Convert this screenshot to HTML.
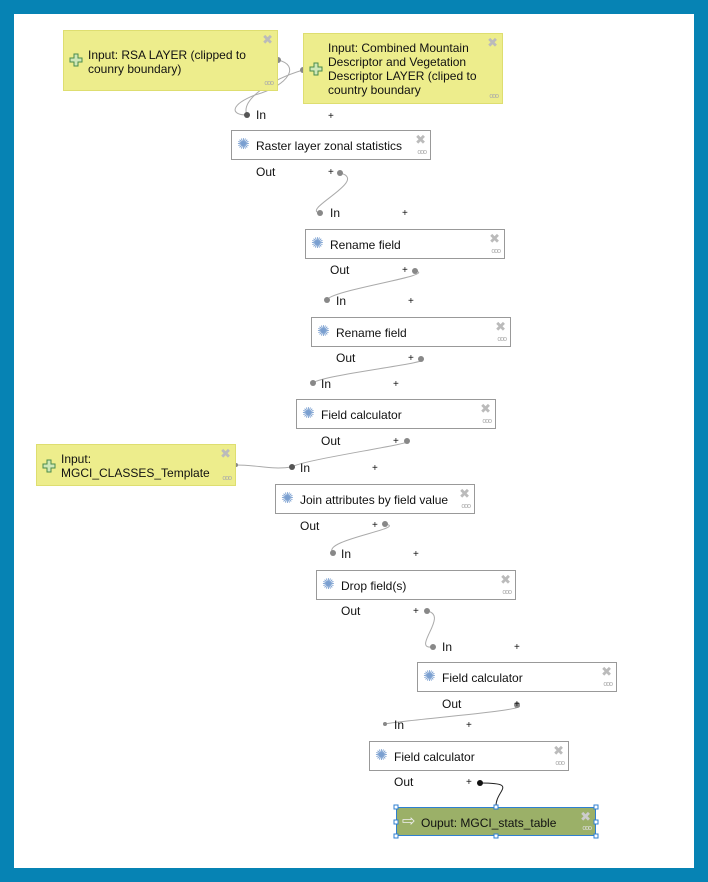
<!DOCTYPE html>
<html><head><meta charset="utf-8"><style>
body{margin:0;width:708px;height:882px;background:#0683b4;position:relative;overflow:hidden;font-family:"Liberation Sans",sans-serif;font-size:12px;color:#111}
#c{position:absolute;left:14px;top:14px;width:680px;height:854px;background:#fff}
.b{position:absolute;box-sizing:border-box;border:1px solid #999;background:#fff;}
.y{background:#eded8c;border-color:#dede70}
.g{background:#9bb068;border:1px solid #2f7fd0}
.t{position:absolute;left:24px;line-height:14px;white-space:nowrap}
.x{position:absolute;right:4px;top:3px;color:#bbb;font-size:13px;line-height:13px;font-family:"DejaVu Sans",sans-serif}
.d{position:absolute;right:4px;bottom:3px;color:#aaa;font-size:7px;line-height:6px;letter-spacing:-1px}
.ic{position:absolute;left:5px;color:#7a9fd0;font-size:15px;line-height:15px;font-family:"DejaVu Sans",sans-serif}
.pl{position:absolute;left:5px;width:14px;height:14px}
.l{position:absolute;white-space:nowrap}
.p{position:absolute;font-size:10px;line-height:10px}
svg{position:absolute;left:0;top:0}
</style></head><body><div id="c"></div>
<svg width="708" height="882" fill="none" stroke="#aaa" stroke-width="1">
<path d="M278 60 C300 65 290 85 255 95 C230 105 230 115 247 115"/>
<path d="M303 70 C270 80 240 100 247 115"/>
<path d="M340 173 C370 180 300 210 320 213"/>
<path d="M415 271 C440 275 330 290 327 300"/>
<path d="M421 359 C440 362 320 375 313 383"/>
<path d="M407 441 C420 443 300 460 292 467"/>
<path d="M236 465 C260 465 270 470 292 467"/>
<path d="M385 524 C410 528 320 540 333 553"/>
<path d="M427 611 C450 615 410 650 433 647"/>
<path d="M517 705 C540 710 400 720 385 724"/>
<path d="M480 783 C520 783 495 790 496 807" stroke="#222"/>
</svg>
<svg width="708" height="882" stroke="none">
<g fill="#888"><circle cx="278" cy="60" r="3"/><circle cx="303" cy="70" r="3"/><circle cx="340" cy="173" r="3"/><circle cx="320" cy="213" r="3"/><circle cx="415" cy="271" r="3"/><circle cx="327" cy="300" r="3"/><circle cx="421" cy="359" r="3"/><circle cx="313" cy="383" r="3"/><circle cx="407" cy="441" r="3"/><circle cx="236" cy="465" r="2"/><circle cx="385" cy="524" r="3"/><circle cx="333" cy="553" r="3"/><circle cx="427" cy="611" r="3"/><circle cx="433" cy="647" r="3"/><circle cx="517" cy="705" r="3"/><circle cx="385" cy="724" r="2"/></g>
<g fill="#555"><circle cx="247" cy="115" r="3"/><circle cx="292" cy="467" r="3"/></g>
<circle cx="480" cy="783" r="3" fill="#111"/>
</svg>

<div class="b y" style="left:63px;top:30px;width:215px;height:61px"><svg class="pl" style="top:22px" viewBox="0 0 14 14"><path d="M5 1h4v4h4v4h-4v4h-4v-4h-4v-4h4z" fill="#cfe8b8" stroke="#4a8a4a"/></svg><div class="t" style="top:17px">Input: RSA LAYER (clipped to<br>counry boundary)</div><div class="x">✖</div><div class="d">ooo</div></div>
<div class="b y" style="left:303px;top:33px;width:200px;height:71px"><svg class="pl" style="top:28px" viewBox="0 0 14 14"><path d="M5 1h4v4h4v4h-4v4h-4v-4h-4v-4h4z" fill="#cfe8b8" stroke="#4a8a4a"/></svg><div class="t" style="top:7px">Input: Combined Mountain<br>Descriptor and Vegetation<br>Descriptor LAYER (cliped to<br>country boundary</div><div class="x">✖</div><div class="d">ooo</div></div>
<div class="b y" style="left:36px;top:444px;width:200px;height:42px"><svg class="pl" style="top:14px" viewBox="0 0 14 14"><path d="M5 1h4v4h4v4h-4v4h-4v-4h-4v-4h4z" fill="#cfe8b8" stroke="#4a8a4a"/></svg><div class="t" style="top:7px">Input:<br>MGCI_CLASSES_Template</div><div class="x">✖</div><div class="d">ooo</div></div>

<div class="b" style="left:231px;top:130px;width:200px;height:30px"><div class="ic" style="top:6px">✺</div><div class="t" style="top:8px">Raster layer zonal statistics</div><div class="x">✖</div><div class="d">ooo</div></div>
<div class="b" style="left:305px;top:229px;width:200px;height:30px"><div class="ic" style="top:6px">✺</div><div class="t" style="top:8px">Rename field</div><div class="x">✖</div><div class="d">ooo</div></div>
<div class="b" style="left:311px;top:317px;width:200px;height:30px"><div class="ic" style="top:6px">✺</div><div class="t" style="top:8px">Rename field</div><div class="x">✖</div><div class="d">ooo</div></div>
<div class="b" style="left:296px;top:399px;width:200px;height:30px"><div class="ic" style="top:6px">✺</div><div class="t" style="top:8px">Field calculator</div><div class="x">✖</div><div class="d">ooo</div></div>
<div class="b" style="left:275px;top:484px;width:200px;height:30px"><div class="ic" style="top:6px">✺</div><div class="t" style="top:8px">Join attributes by field value</div><div class="x">✖</div><div class="d">ooo</div></div>
<div class="b" style="left:316px;top:570px;width:200px;height:30px"><div class="ic" style="top:6px">✺</div><div class="t" style="top:8px">Drop field(s)</div><div class="x">✖</div><div class="d">ooo</div></div>
<div class="b" style="left:417px;top:662px;width:200px;height:30px"><div class="ic" style="top:6px">✺</div><div class="t" style="top:8px">Field calculator</div><div class="x">✖</div><div class="d">ooo</div></div>
<div class="b" style="left:369px;top:741px;width:200px;height:30px"><div class="ic" style="top:6px">✺</div><div class="t" style="top:8px">Field calculator</div><div class="x">✖</div><div class="d">ooo</div></div>
<div class="b g" style="left:396px;top:807px;width:200px;height:29px"><div class="ic" style="top:5px;color:#eee;font-size:16px">⇨</div><div class="t" style="top:8px">Ouput: MGCI_stats_table</div><div class="x" style="color:#ccc">✖</div><div class="d" style="color:#ddd">ooo</div></div>

<div class="l" style="left:256px;top:108px">In</div><div class="p" style="left:328px;top:112px">+</div>
<div class="l" style="left:256px;top:165px">Out</div><div class="p" style="left:328px;top:168px">+</div>
<div class="l" style="left:330px;top:206px">In</div><div class="p" style="left:402px;top:209px">+</div>
<div class="l" style="left:330px;top:263px">Out</div><div class="p" style="left:402px;top:266px">+</div>
<div class="l" style="left:336px;top:294px">In</div><div class="p" style="left:408px;top:297px">+</div>
<div class="l" style="left:336px;top:351px">Out</div><div class="p" style="left:408px;top:354px">+</div>
<div class="l" style="left:321px;top:377px">In</div><div class="p" style="left:393px;top:380px">+</div>
<div class="l" style="left:321px;top:434px">Out</div><div class="p" style="left:393px;top:437px">+</div>
<div class="l" style="left:300px;top:461px">In</div><div class="p" style="left:372px;top:464px">+</div>
<div class="l" style="left:300px;top:519px">Out</div><div class="p" style="left:372px;top:521px">+</div>
<div class="l" style="left:341px;top:547px">In</div><div class="p" style="left:413px;top:550px">+</div>
<div class="l" style="left:341px;top:604px">Out</div><div class="p" style="left:413px;top:607px">+</div>
<div class="l" style="left:442px;top:640px">In</div><div class="p" style="left:514px;top:643px">+</div>
<div class="l" style="left:442px;top:697px">Out</div><div class="p" style="left:514px;top:700px">+</div>
<div class="l" style="left:394px;top:718px">In</div><div class="p" style="left:466px;top:721px">+</div>
<div class="l" style="left:394px;top:775px">Out</div><div class="p" style="left:466px;top:778px">+</div>
<svg width="708" height="882" stroke="#2f7fd0" fill="#fff"><rect x="394" y="805" width="4" height="4"/><rect x="494" y="805" width="4" height="4"/><rect x="594" y="805" width="4" height="4"/><rect x="394" y="820" width="4" height="4"/><rect x="594" y="820" width="4" height="4"/><rect x="394" y="834" width="4" height="4"/><rect x="494" y="834" width="4" height="4"/><rect x="594" y="834" width="4" height="4"/></svg>
</body></html>
